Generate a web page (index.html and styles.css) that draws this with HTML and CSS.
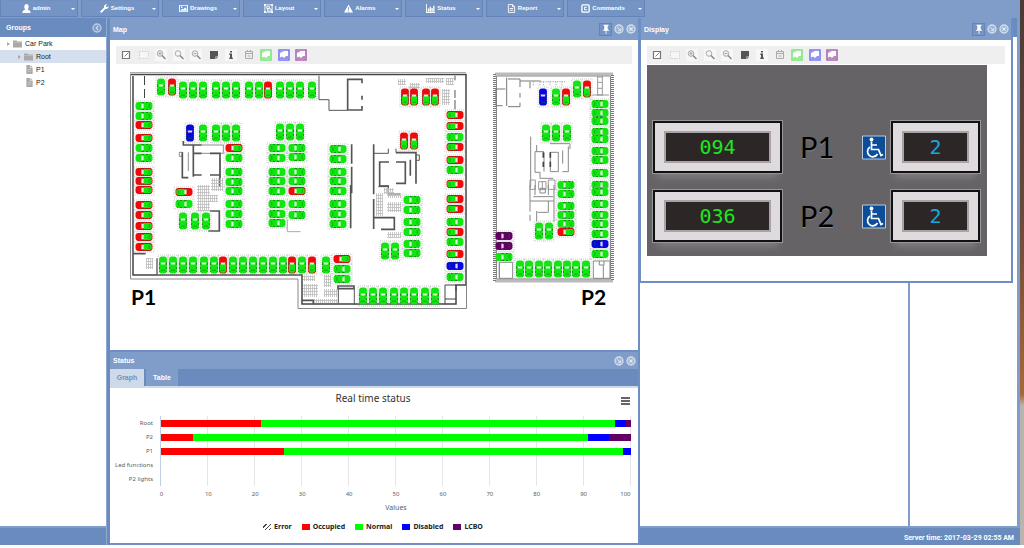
FILE: index.html
```html
<!DOCTYPE html>
<html lang="en">
<head>
    <meta charset="UTF-8">
    <title>Car Park</title>
    <link rel="stylesheet" href="styles.css">
</head>
<body>

<!-- shared icons -->
<svg class="defs" aria-hidden="true">
    <symbol id="i-pin" viewBox="0 0 12 12"><path d="M3 1h6v1H8v4l2 2H2l2-2V2H3zM5.500 8h1v4h-1z" fill="#fff"/></symbol>
    <symbol id="i-min" viewBox="0 0 12 12"><circle cx="6" cy="6" r="4.800" fill="#9fb5d6" stroke="#d3deee" stroke-width="1.600"/><path d="M4 4l4 4M8 5v3H5" stroke="#e4ebf5" fill="none"/></symbol>
    <symbol id="i-close" viewBox="0 0 12 12"><circle cx="6" cy="6" r="4.800" fill="#9fb5d6" stroke="#d3deee" stroke-width="1.600"/><path d="M4 4l4 4M8 4L4 8" stroke="#e4ebf5" stroke-width="1.300"/></symbol>
    <symbol id="i-left" viewBox="0 0 12 12"><circle cx="6" cy="6" r="4.800" fill="#7d9ac6" stroke="#bccbe3" stroke-width="1.600"/><path d="M7.500 3.500L5 6l2.500 2.500" stroke="#d3deee" stroke-width="1.500" fill="none"/></symbol>
    <symbol id="i-folder" viewBox="0 0 9 8"><path d="M0 1h3.500l1 1H9v6H0z" fill="#a9a9a9"/><path d="M0 3h9" stroke="#c9c9c9" stroke-width=".6"/></symbol>
    <symbol id="i-file" viewBox="0 0 9 10"><path d="M1 0h4v3h3v7H1zM5.700 0L8 2.400H5.700z" fill="#a9a9a9"/><path d="M2.500 5h4M2.500 7h4" stroke="#d8d8d8" stroke-width=".7"/></symbol>
    <symbol id="i-edit" viewBox="0 0 12 12"><path d="M2.500 2.500h7v7h-7z" fill="#fff" stroke="#777" stroke-width="1.200"/><path d="M4.500 7.500l4-4" stroke="#888" fill="none"/></symbol>
    <symbol id="i-select" viewBox="0 0 12 12"><path d="M1.500 2.500h9v7h-9z" fill="#f6f6f6" stroke="#d2d2d2" stroke-dasharray="1.500 1"/></symbol>
    <symbol id="i-zin" viewBox="0 0 12 12"><path d="M0 0h12v12H0z" fill="#f7f7f7"/><circle cx="5" cy="4.500" r="2.800" fill="#eee" stroke="#aaa"/><path d="M3.500 4.500h3M5 3v3" stroke="#999" stroke-width=".8"/><path d="M7 6.500l3.500 3.500" stroke="#888" stroke-width="1.500"/></symbol>
    <symbol id="i-zoom" viewBox="0 0 12 12"><path d="M0 0h12v12H0z" fill="#f7f7f7"/><circle cx="5" cy="4.500" r="2.800" fill="#f4f4f4" stroke="#aaa"/><path d="M7 6.500l3.500 3.500" stroke="#888" stroke-width="1.500"/></symbol>
    <symbol id="i-zout" viewBox="0 0 12 12"><path d="M0 0h12v12H0z" fill="#f7f7f7"/><circle cx="5" cy="4.500" r="2.800" fill="#eee" stroke="#aaa"/><path d="M3.500 4.500h3" stroke="#999" stroke-width=".8"/><path d="M7 6.500l3.500 3.500" stroke="#888" stroke-width="1.500"/></symbol>
    <symbol id="i-note" viewBox="0 0 12 12"><path d="M2 2h8v5.500H7.500V10H2z" fill="#555"/><path d="M8 8h2l-2 2z" fill="#777"/></symbol>
    <symbol id="i-info" viewBox="0 0 12 12"><path d="M0 0h12v12H0z" fill="#f7f7f7"/><path d="M5 2h2v1.500H5zM4.300 4.500H7v4h.8V10H4.300V8.500H5V6h-.7z" fill="#555"/></symbol>
    <symbol id="i-cal" viewBox="0 0 12 12"><path d="M2.500 2.500h7v7h-7zM2.500 4.500h7M4.500 1v2M7.500 1v2M4.500 7h3" fill="none" stroke="#aaa"/></symbol>
    <symbol id="i-area" viewBox="0 0 12 12"><path d="M1 1h10v10H1z" fill="#fff" stroke="currentColor" stroke-width="1.600"/><path d="M2 8.500l2-1 2 1.500 2-2h2V10H2zM2 2h4L2 4z" fill="currentColor" opacity=".8"/></symbol>
    <!-- a car pointing up, currentColor is the bay state -->
    <symbol id="car" viewBox="-5 -10 10 20" overflow="visible">
        <rect x="-3.900" y="-8.500" width="7.800" height="17" rx="2.800" fill="currentColor"/>
        <rect class="rear" x="-3.100" y="-1.500" width="6.200" height="9.200" rx="1.800"/>
        <path d="M-2.400-2.600h4.800l-.5 2.200h-3.800z" fill="#fff" opacity=".85"/>
        <path d="M-3.500-2.500v2.500M3.500-2.500v2.500M-3.500 2v2M3.500 2v2M-3.200 6v1M3.200 6v1" stroke="#2a4a2a" stroke-width=".7" opacity=".8"/>
        <path d="M-2 5.200h4" stroke="#0a7a0a" stroke-width=".5"/>
    </symbol>
    <symbol id="i-access" viewBox="0 0 24 24">
        <path d="M.5.5h23v23H.5z" fill="#0d4c98" stroke="#b8cbe2"/>
        <circle cx="9.500" cy="4" r="1.900" fill="#fff"/>
        <path d="M9.500 6v8h7l2.500 6 2-1M9.500 9.500h5.500" fill="none" stroke="#fff" stroke-width="1.700"/>
        <path d="M8 11.500a5.300 5.300 0 1 0 7.500 7" fill="none" stroke="#fff" stroke-width="1.700"/>
    </symbol>
</svg>

<div class="app">
    <nav class="menu">
        <button type="button"><svg viewBox="0 0 10 10"><path d="M5 0c3 0 3 5 1.200 6C8 7 9.500 7 9.500 10h-9C.5 7 2 7 3.800 6 2 5 2 0 5 0z"/></svg><span>admin</span></button>
        <button type="button"><svg viewBox="0 0 10 10"><path d="M0 8.500L4.500 4C4 1.500 6 0 8 .500L6.500 2l.3 1.300 1.300.3L9.700 2C10 4.500 8 6 6 5.500L1.500 10z"/></svg><span>Settings</span></button>
        <button type="button"><svg viewBox="0 0 10 10"><path d="M0 1h10v8H0zM1 2v6h8V2z" fill-rule="evenodd"/><path d="M1.500 7.500l2-2.500 1 1L7 3.500l1.500 2v2z"/><circle cx="3" cy="3.500" r=".9"/></svg><span>Drawings</span></button>
        <button type="button"><svg viewBox="0 0 10 10"><path d="M1 1h8v8H1zM3 3h3v2H3zM4 5.500h4V8H4z" fill="none" stroke="#fff"/><path d="M0 0h2v2H0zM8 0h2v2H8zM0 8h2v2H0zM8 8h2v2H8z"/></svg><span>Layout</span></button>
        <button type="button"><svg viewBox="0 0 10 10"><path d="M5 .5L10 9.500H0zM4.500 3.500v3h1v-3zM4.500 7.300v1h1v-1z" fill-rule="evenodd"/></svg><span>Alarms</span></button>
        <button type="button"><svg viewBox="0 0 10 10"><path d="M0 0h1v9h9v1H0zM2 5h1.500v3.500H2zM4 3h1.500v5.500H4zM6 4.500h1.500v4H6zM8 2h1.500v6.500H8z"/></svg><span>Status</span></button>
        <button type="button"><svg viewBox="0 0 10 10"><path d="M1.500.5H6L8.500 3v6.500h-7zM6 .500V3h2.500M3 5h4M3 7h4" fill="none" stroke="#fff"/></svg><span>Report</span></button>
        <button type="button"><svg viewBox="0 0 10 10"><rect x="1" y="1" width="8" height="8" rx="1" fill="none" stroke="#fff" stroke-width="1.500"/><path d="M3.500 3h3v1.300h-2v1.400h2V7h-3z"/></svg><span>Commands</span></button>
    </nav>

    <aside class="side">
        <div class="side-head">
            <h2>Groups</h2>
            <button type="button" class="tool" aria-label="Collapse"><svg><use href="#i-left"/></svg></button>
        </div>
        <ul class="tree">
            <li><i class="arrow"></i><svg><use href="#i-folder"/></svg><span>Car Park</span></li>
            <li class="sub on"><i class="arrow"></i><svg><use href="#i-folder"/></svg><span>Root</span></li>
            <li class="sub leaf"><svg><use href="#i-file"/></svg><span>P1</span></li>
            <li class="sub leaf"><svg><use href="#i-file"/></svg><span>P2</span></li>
        </ul>
    </aside>

    <main class="windows">
        <section class="win map">
            <header class="win-head">
                <h2>Map</h2>
                <button type="button" class="tool pin" aria-label="Pin"><svg><use href="#i-pin"/></svg></button>
                <button type="button" class="tool" aria-label="Minimize"><svg><use href="#i-min"/></svg></button>
                <button type="button" class="tool" aria-label="Close"><svg><use href="#i-close"/></svg></button>
            </header>
            <div class="win-body">
                <div class="bar"></div>
                <svg class="plan" viewBox="110 64 528 286">
                    <!-- P1 outer walls -->
                    <g fill="none" stroke="#444">
                        <path d="M130 74.500H466V285H456V304H302V275H133V76" stroke-width="1.500"/>
                        <path d="M130.500 74V279H298V308.500H466.500V285" stroke="#888"/>
                        <path d="M130 72.500H466" stroke="#aaa"/>
                        <path d="M445 304V285h11v6M445 299h11M144.500 76v9m0 4v9" />
                    </g>
                    <g transform="translate(120 65) scale(.3333)" fill="none" stroke="#555" stroke-width="5">
                        <path d="M190 228v12h55M187 262v76h18M220 240v95M220 265h25M270 265h30v65h-30M220 330h25M300 330v35"/>
                        <path d="M205 262v56M178 262h9v12h-9zM245 240h65v25h-65M300 280v60" stroke-width="2"/>
                    </g>
                    <g transform="translate(120 185) scale(.3333)" fill="none" stroke="#555" stroke-width="5">
                        <path d="M270 78h28v60h-33M40 206h37"/>
                        <path d="M111 220v50" stroke-width="4"/>
                        <path d="M502 105v35h40" stroke="#aaa" stroke-width="3"/>
                    </g>
                    <g transform="translate(295 65) scale(.3333)" fill="none" stroke="#555" stroke-width="5">
                        <path d="M201 55V43h-43v92h43v-12M201 92v12M282 291h-28v72h28M303 291h28v64h-28M303 263h60v93M346 284v48M170 238v58M170 305v80M236 238v150"/>
                        <path d="M72 32v72h30v32h55M236 265h44v-14M303 263v-12M363 270h10v16h-10M480 32v14M480 75v24M480 105v28" stroke-width="3"/>
                        <path d="M254 363h26v30" stroke-width="3"/>
                    </g>
                    <g transform="translate(295 185) scale(.3333)" fill="none" stroke="#555" stroke-width="5">
                        <path d="M167 0v130M236 42v90M236 98h62v35h-40M177 303h-48v8h48zM20 346h35v12"/>
                        <path d="M250 5h30v22h35M130 311v45M178 312v48" stroke-width="3"/>
                    </g>
                    <!-- stairs -->
                    <g fill="url(#stairs)">
                        <path d="M211 178h12v13h-12zM197 185h13v26h-13zM206 195h12v7h-12zM146 258h7v11h-7z"/>
                        <path d="M398 79h8v6h-8zM426 78h18v5h-18zM446 78h8v7h-8zM410 83h10v6h-10zM442 89h8v16h-8z"/>
                        <path d="M376 193h7v23h-7zM387 193h14v5h-14zM387 202h14v10h-14zM387 232h14v6h-14zM384 188h10v6h-10z"/>
                        <path d="M303 276h12v5h-12zM303 284h15v13h-15zM324 275h7v12h-7zM324 289h14v8h-14zM314 299h24v4h-24z"/>
                    </g>
                    <!-- P2 outer walls -->
                    <g fill="none">
                        <path d="M494.500 74V281H612.500V74z" stroke="#777" stroke-width="3" stroke-dasharray="1 1"/>
                        <path d="M496.500 76V279H610.500V76z" stroke="#888"/>
                    </g>
                    <g transform="translate(480 65) scale(.3333)" fill="none" stroke="#888" stroke-width="3">
                        <path d="M120 48h62M150 50v20M76 72H48v50h20M80 38v85M84 42h36v24M84 125h36v-12M120 84v14" stroke="#777"/>
                        <path d="M182 50h76M160 50v14M180 50v14M190 50v14M210 50v14M228 50v14M246 50v14" stroke="#aaa" stroke-dasharray="4 3"/>
                        <path d="M353 32v60M367 32v60M353 36h14M353 52h14M353 70h14M353 90h14M337 90h50" stroke="#999"/>
                        <path d="M152 215v150M170 240v20M165 260h27M165 260v62h15v18h40M192 262v58M211 262v58M211 262h24v58h-24M265 244v76h-18M248 256v40M210 236h60v16"/>
                        <path d="M190 262v16M190 290v16M211 262v16M211 290v16" stroke="#444" stroke-width="5"/>
                        <path d="M150 345h16v28h-16zM176 350h22v24h-22zM205 345h20v28h-20zM187 350v24" stroke="#999"/>
                    </g>
                    <g transform="translate(480 185) scale(.3333)" fill="none" stroke="#888" stroke-width="3">
                        <path d="M150 0v80M165 0v30M205 0v30M222 0v110M150 48h72M170 78v32M205 48v34h-32M150 90v18M180 10h16v14h-16zM160 35h60"/>
                        <path d="M58 232h40v48H58zM58 232v48M340 228h50v52h-50zM370 240v40M358 228v12h14v-12"/>
                    </g>
                    <defs>
                        <pattern id="stairs" width="2" height="3" patternUnits="userSpaceOnUse"><path d="M0 .5h2M.5 0v3" stroke="#bbb" stroke-width=".8"/></pattern>
                    </defs>
                    <g id="cars"></g>
                    <text class="plan-name" x="131" y="305">P1</text>
                    <text class="plan-name" x="581" y="305">P2</text>
                </svg>
            </div>
        </section>

        <section class="win status">
            <header class="win-head">
                <h2>Status</h2>
                <button type="button" class="tool" aria-label="Minimize"><svg><use href="#i-min"/></svg></button>
                <button type="button" class="tool" aria-label="Close"><svg><use href="#i-close"/></svg></button>
            </header>
            <div class="tabs">
                <button type="button" class="on">Graph</button>
                <button type="button">Table</button>
            </div>
            <div class="chart">
                <div class="chart-head">
                    <h3>Real time status</h3>
                    <button type="button" aria-label="Chart menu"></button>
                </div>
                <div class="chart-main">
                    <ul class="names">
                        <li>Root</li><li>P2</li><li>P1</li><li>Led functions</li><li>P2 lights</li>
                    </ul>
                    <div class="plot" id="plot"></div>
                </div>
                <div class="ticks">
                    <span>0</span><span>10</span><span>20</span><span>30</span><span>40</span><span>50</span><span>60</span><span>70</span><span>80</span><span>90</span><span>100</span>
                </div>
                <p class="axis">Values</p>
                <ul class="legend">
                    <li><i class="error"></i>Error</li>
                    <li><i class="occupied"></i>Occupied</li>
                    <li><i class="normal"></i>Normal</li>
                    <li><i class="disabled"></i>Disabled</li>
                    <li><i class="lcbo"></i>LCBO</li>
                </ul>
            </div>
        </section>
    </main>

    <div class="right">
        <div class="pane-head"></div>
        <div class="pane"></div>
        <div class="pane"></div>

        <section class="win display">
            <header class="win-head">
                <h2>Display</h2>
                <button type="button" class="tool pin" aria-label="Pin"><svg><use href="#i-pin"/></svg></button>
                <button type="button" class="tool" aria-label="Minimize"><svg><use href="#i-min"/></svg></button>
                <button type="button" class="tool" aria-label="Close"><svg><use href="#i-close"/></svg></button>
            </header>
            <div class="win-body">
                <div class="bar"></div>
                <div class="board">
                    <div class="led"><b>094</b></div>
                    <span class="level">P1</span>
                    <svg class="access"><use href="#i-access"/></svg>
                    <div class="led blue"><b>2</b></div>

                    <div class="led"><b>036</b></div>
                    <span class="level">P2</span>
                    <svg class="access"><use href="#i-access"/></svg>
                    <div class="led blue"><b>2</b></div>
                </div>
            </div>
        </section>
    </div>

    <footer class="foot">Server time: 2017-03-29 02:55 AM</footer>
</div>

<script>
    // toolbar of the drawing windows
    var icons = ['edit', 'select', 'zin', 'zoom', 'zout', 'note', 'info', 'cal', 'area', 'area', 'area'],
        bars = document.getElementsByClassName('bar')

    for (var i = 0; i < bars.length; i++) {
        bars[i].innerHTML = icons.map(function (name) {
            return '<button type="button" class="' + name + '" aria-label="' + name + '"><svg><use href="#i-' + name + '"/></svg></button>'
        }).join('')
    }

    // cars: u = up, l = left, r = right
    // a number is a free bay, 'r' occupied, 'b' disabled, 'p' lcbo
    var html = ''

    function car(x, y, dir, state) {
        var turn = {u: 0, l: -90, r: 90}[dir]
        html += '<g class="car ' + (state || 'n') + '" transform="translate(' + x + ' ' + y + ') rotate(' + turn + ')">' +
            '<rect class="bay" x="-5" y="-10" width="10" height="20"/>' +
            '<use href="#car" x="-5" y="-10" width="10" height="20"/></g>'
    }

    function split(v) {
        v = String(v)
        return [parseInt(v), v.replace(/\d/g, '')]
    }

    function row(y, list) {
        list.forEach(function (v) {
            var s = split(v)
            car(s[0], y, 'u', s[1])
        })
    }

    function col(x, dir, list) {
        list.forEach(function (v) {
            var s = split(v)
            car(x, s[0], dir, s[1])
        })
    }

    // P1
    row(87, [161, '172r'])
    row(90, [183, 193, 203, 216, 226, 236, 249, 259, '268r', 280, 290, 300, 312])
    row(133, ['190b', 203, 216, 226, 236])
    row(132, [280, 290, 300])
    row(97, ['405r', '414r', '426r', '435r'])
    row(141, ['404r', '414r'])
    row(221, [183, 195, 206])
    row(251, [385, 395])
    row(265, [163, 173, 183, 193, 204, 214, '223r', 233, 243, 253, 263, 273, 283, '292r', 302, '312r', 326])
    row(296, [363, 373, 383, 394, 404, 414, 425, 435])
    col(144, 'l', [106, 116, '125r', '138r', 148, 158, '172r', '181r', '190r', '205r', '215r', '226r', '237r', '247r'])
    col(184, 'r', ['192r', 204])
    col(234, 'l', ['148r', 158, 172, 182, 191, 204, 214, 224])
    col(277, 'r', [148, 158, 172, 181, 191, 204, 214, 223])
    col(297, 'l', [148, 157, 172, 181, '191r', 204, 215])
    col(338, 'r', [149, 159, 172, 181, 191, 204, 214, 224])
    col(342, 'l', ['259r'])
    col(342, 'r', [269, 279])
    col(412, 'l', [200, 210, 222, 232, 244, 253])
    col(455, 'r', ['115r', '126r', 137, '147r', '160r', 170, '184r', '199r', '209r', 222, '232r', 242, '254r', '266b', 277])

    // P2
    row(97, ['543b', 556, '566r'])
    row(89, [577, '587r'])
    row(133, [546, 556, 567])
    row(231, [539, 549])
    row(269, [520, 529, 539, 548, 558, 567, 576, 586])
    col(600, 'r', [104, 113, 121, 132, 139, 151, 160, 173, 185, 192, 204, 215, 224, 234, '244b', 254])
    col(566, 'l', [185, 194, 206, 215, 224, '232r'])
    col(504, 'l', ['236p', '246p', 257])

    document.getElementById('cars').innerHTML = html

    // chart rows: occupied, normal, disabled, lcbo in percent
    var data = [
            [21.3, 75.2, 2.4, 1.1],
            [6.9, 83.9, 4.6, 4.6],
            [26.1, 72.3, 1.6, 0],
            [0, 0, 0, 0],
            [0, 0, 0, 0]
        ],
        names = ['occupied', 'normal', 'disabled', 'lcbo']

    document.getElementById('plot').innerHTML = data.map(function (values) {
        return '<div class="line">' + values.map(function (v, n) {
            return '<i class="' + names[n] + '" style="width:' + v + '%"></i>'
        }).join('') + '</div>'
    }).join('')
</script>
</body>
</html>
```
FILE: styles.css
```css
*{
    box-sizing: border-box;
}

body{
    margin: 0;
    min-height: 100vh;
    padding: 0 4px 3px 0;
    background: linear-gradient(#fdfdff, #fdfdff) bottom / 100% 3px no-repeat,
        linear-gradient(#4b3a35, #6b4a3a 40%, #a5683c 72%, #b9b4b0 74%, #b9b4b0);
    font: 7px/13px "Liberation Sans", Arial, sans-serif;
    color: #333;
}

h2, h3, p, ul{
    margin: 0;
    padding: 0;
    font-size: 7px;
    list-style: none;
}

button{
    margin: 0;
    padding: 0;
    border: 0;
    background: none;
    font: inherit;
    color: inherit;
}

.defs{
    position: absolute;
    width: 0;
    height: 0;
}

.app{
    display: grid;
    grid-template-columns: 107px minmax(0, 1fr) 380px;
    grid-template-rows: 18px 1fr 19px;
    min-height: calc(100vh - 3px);
    background: #7f9dc8;
}

/* top menu */
.menu{
    grid-column: 1 / -1;
    display: flex;
    gap: 3px;
}
.menu button{
    display: flex;
    align-items: center;
    justify-content: center;
    gap: 2px;
    width: 78px;
    height: 17px;
    border: 1px solid #6384b8;
    border-top-color: #7290c0;
    background: #7394c5;
    color: #fff;
    font-size: 6px;
    font-weight: bold;
}
.menu svg{
    width: 9px;
    height: 9px;
    fill: #fff;
}
.menu span{
    flex: none;
}
.menu button::before{
    content: "";
    order: 3;
    margin-left: auto;
    margin-right: 2px;
    border: 2px solid transparent;
    border-top-color: #fff;
    border-bottom: 0;
}
.menu button::after{
    content: "";
    order: -1;
    margin-right: auto;
}

/* groups */
.side{
    display: flex;
    flex-direction: column;
    margin-right: 1px;
    background: #fff;
}
.side-head{
    display: flex;
    align-items: center;
    height: 19px;
    padding: 0 4px 0 6px;
    background: #6a8bbd;
    color: #fff;
}
.side-head h2, .win-head h2{
    margin-right: auto;
}
.tree{
    color: #222;
}
.tree li{
    display: flex;
    align-items: center;
    gap: 3px;
    height: 13px;
    padding-left: 7px;
}
.tree .sub{
    padding-left: 18px;
}
.tree .leaf{
    gap: 2px;
    padding-left: 25px;
}
.tree .on{
    background: #d6dfed;
}
.tree svg{
    width: 9px;
    height: 9px;
}
.arrow{
    border: 2px solid transparent;
    border-left: 3px solid #aaa;
    border-right: 0;
}

/* windows */
.windows{
    grid-row: 2 / 4;
    grid-column: 2;
    display: flex;
    flex-direction: column;
    padding-left: 3px;
    background: #6a8bbd;
    border-left: 1px solid #8fa9d0;
    margin-left: -1px;
    z-index: 1;
}
.win{
    border-right: 2px solid #6e8fc3;
    border-bottom: 2px solid #6e8fc3;
    background: #fff;
}
.win-head{
    display: flex;
    align-items: center;
    gap: 2px;
    height: 22px;
    padding: 0 2px 0 3px;
    background: #7f9dc8;
    color: #fff;
}
.tool{
    display: flex;
    width: 10px;
    height: 10px;
}
.tool svg{
    width: 10px;
    height: 10px;
}
.pin{
    align-items: center;
    justify-content: center;
    width: 13px;
    height: 13px;
    border: 1px solid #6384b8;
    background: #7394c5;
}
.win-body{
    padding-top: 6px;
}
.bar{
    display: flex;
    gap: 6px;
    align-items: center;
    height: 18px;
    margin: 0 6px;
    padding: 0 4px;
    background: #efefef;
}
.bar button{
    display: flex;
    flex: none;
    width: 12px;
    height: 12px;
}
.bar button:nth-child(even){
    margin-right: -1px;
}
.bar .area{
    color: #78e878;
}
.bar .area ~ .area{
    color: #7878f0;
}
.bar .area ~ .area ~ .area{
    color: #a868b0;
}
.bar svg{
    width: 12px;
    height: 12px;
}

/* parking plan */
.plan{
    display: block;
    width: 100%;
}
.plan-name{
    font: bold 21px Lato, sans-serif;
    fill: #000;
}
.bay{
    fill: none;
    stroke: #aaa;
    stroke-width: .6px;
    stroke-dasharray: 1 1;
}
.car{ color: #11e611; --rear: #11e611; }
.car.r{ color: #ee0a0a; }
.car.b{ color: #0707dd; --rear: #0707dd; }
.car.p{ color: #640064; --rear: #640064; }
.rear{
    fill: var(--rear);
}

/* status */
.status{
    flex: 1;
}
.status .win-head{
    height: 17px;
}
.tabs{
    display: flex;
    gap: 2px;
    height: 19px;
    background: #6a8bbd;
    border-bottom: 2px solid #ced9ea;
}
.tabs button{
    width: 32px;
    background: #809dc9;
    color: #fff;
    font-weight: bold;
}
.tabs .on{
    width: 34px;
    background: #ced9ea;
    color: #7391c0;
}
.chart{
    padding: 0 7px 0 5px;
    overflow: hidden;
    font-family: "Noto Sans", sans-serif;
    font-size: 6px;
    color: #606060;
}
.chart-head{
    display: flex;
    align-items: center;
    height: 20px;
}
.chart-head h3{
    flex: 1;
    padding-left: 10px;
    text-align: center;
    font-size: 10px;
    font-weight: normal;
    color: #333;
}
.chart-head button{
    width: 9px;
    height: 8px;
    margin: 5px 1px 0 0;
    background: repeating-linear-gradient(#666 0 2px, transparent 2px 3px);
}
.chart-main{
    display: flex;
    padding-top: 8px;
}
.names{
    width: 46px;
    padding-right: 8px;
    text-align: right;
    white-space: nowrap;
}
.names li{
    height: 14px;
    font-size: 6px;
    line-height: 14px;
}
.plot{
    flex: 1;
    margin-left: -1px;
    border-left: 1px solid #c0d0e0;
    background: repeating-linear-gradient(to left, #e6e6e6 0 1px, transparent 1px 10%);
}
.line{
    display: flex;
    height: 14px;
    padding: 4px 0 3px;
}
.occupied{ background: #f00; }
.normal{ background: #0f0; }
.disabled{ background: #00f; }
.lcbo{ background: #640064; }
.error{
    background: repeating-linear-gradient(135deg, #fff 0 2px, #444 2px 3px);
}
.ticks{
    display: grid;
    grid-template-columns: repeat(11, 1fr);
    margin: 2px -23px 0 23px;
    text-align: center;
}
.ticks span:last-child{
    padding-right: 50%;
    text-align: right;
}
.axis{
    padding-left: 46px;
    text-align: center;
}
.legend{
    display: flex;
    justify-content: center;
    gap: 10px;
    margin-top: 6px;
    color: #222;
    font-weight: bold;
}
.legend li{
    display: flex;
    align-items: center;
    gap: 3px;
}
.legend i{
    width: 8px;
    height: 6px;
}

/* right side */
.right{
    position: relative;
    grid-row: 2;
    grid-column: 3;
    display: grid;
    grid-template-columns: 1fr 107px;
    grid-template-rows: 19px 1fr;
    column-gap: 2px;
    padding-right: 3px;
}
.pane-head{
    grid-column: 1 / -1;
    background: #6a8bbd;
}
.pane{
    background: #fff;
}
.display{
    position: absolute;
    top: 0;
    left: 0;
    right: 7px;
    border-left: 1px solid #6e8fc3;
}
.display .win-body{
    padding-bottom: 25px;
}

/* display board */
.board{
    display: grid;
    grid-template-columns: 131px 1fr 24px 95px;
    align-items: center;
    gap: 15px 0;
    width: 340px;
    margin: 1px 0 0 6px;
    padding: 55px 6px 13px 5px;
    background: #656366;
}
.led{
    height: 54px;
    padding: 8px 9px;
    border: 3px solid #111;
    outline: 1px solid #98959a;
    outline-offset: -1px;
    background: #dedadd;
    box-shadow: 0 8px 8px -5px #858386;
}
.led b{
    display: block;
    height: 32px;
    border: 2px solid #a8a3a5;
    background: #2c2627;
    color: #1ee61e;
    font: 20px/28px "DejaVu Sans Mono", monospace;
    text-align: center;
}
.led.blue{
    margin-left: 4px;
}
.led.blue b{
    color: #17a8d8;
}
.level{
    padding-left: 17px;
    font: 29px/32px Lato, sans-serif;
    color: #000;
    text-shadow: 0 1px #8a888b;
}
.access{
    width: 24px;
    height: 25px;
}

.foot{
    grid-row: 3;
    grid-column: 1 / -1;
    padding: 4px 6px 0 0;
    border-top: 2px solid #7f9dc8;
    background: #6a8bbd;
    color: #fff;
    font-family: Roboto, sans-serif;
    font-weight: bold;
    text-align: right;
}
```
